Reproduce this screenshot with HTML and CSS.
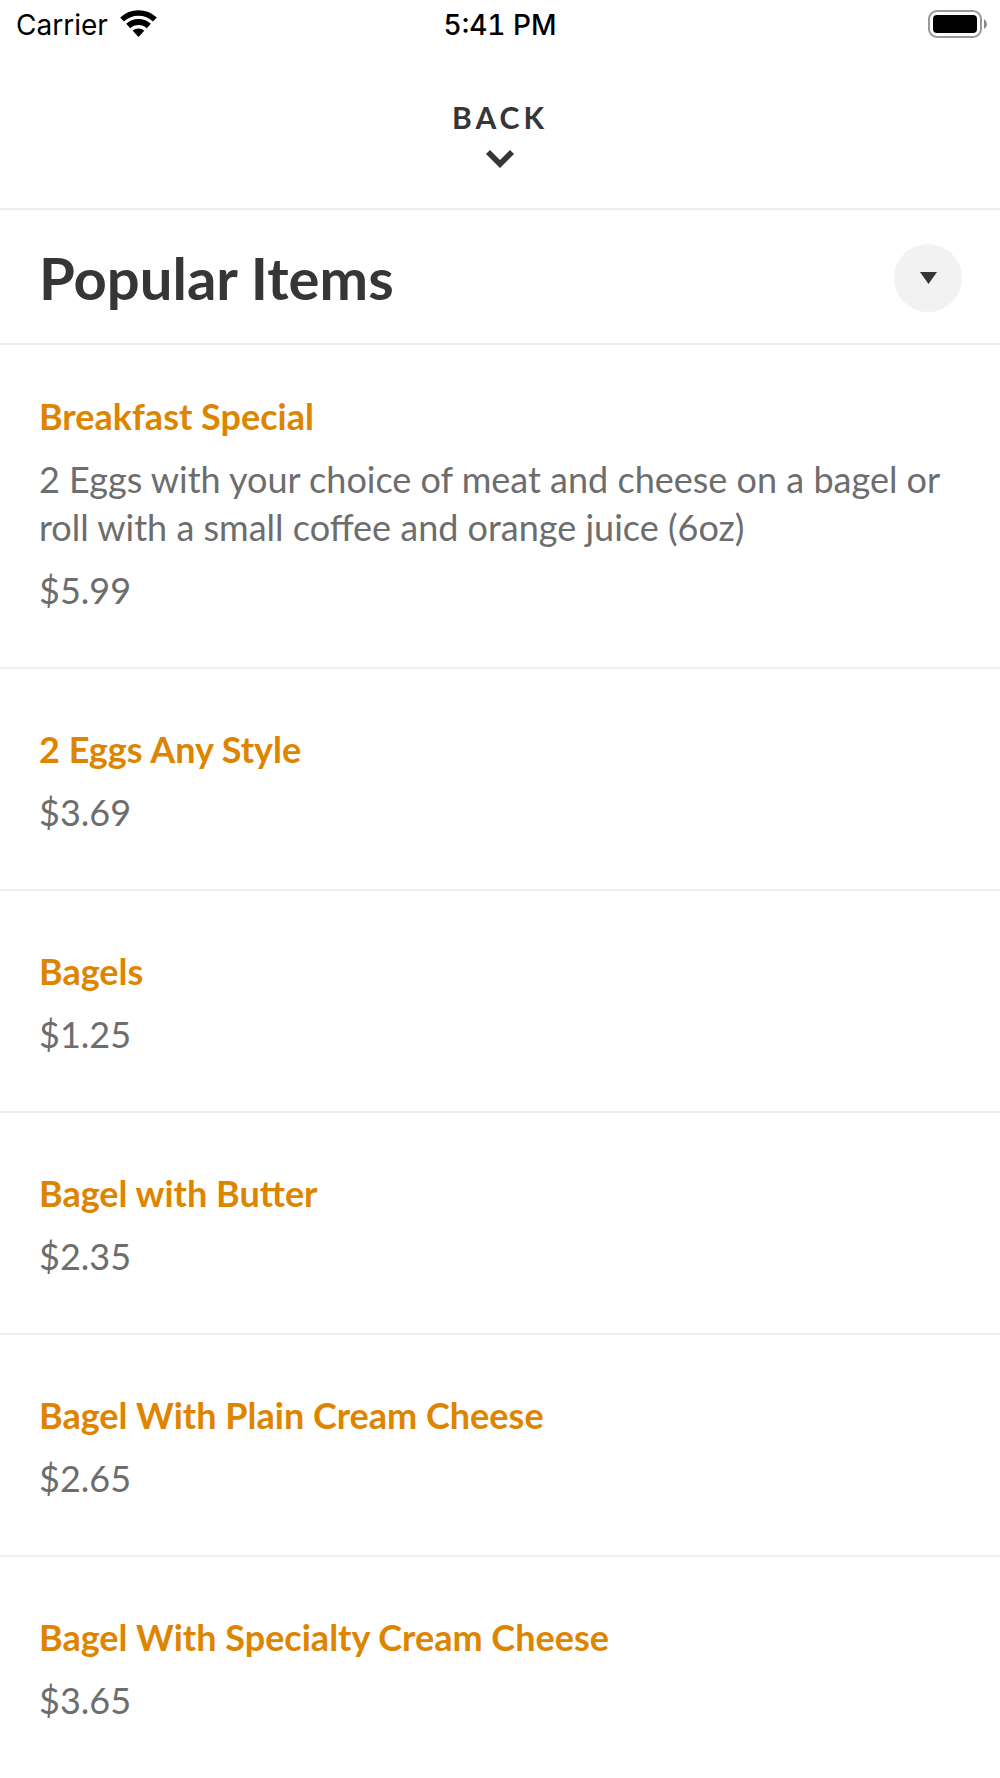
FILE: index.html
```html
<!DOCTYPE html>
<html lang="en">
<head>
    <meta charset="utf-8">
    <meta name="viewport" content="width=device-width, initial-scale=1">
    <title>Popular Items</title>
    <link rel="stylesheet" href="styles.css">
</head>
<body>
    <div class="status-bar">
        <div class="status-left">
            <span>Carrier</span>
            <svg class="wifi" viewBox="0 0 37 30" aria-hidden="true">
                <path d="M2.1 9.5 A24 24 0 0 1 34.9 9.5" fill="none" stroke="#000" stroke-width="5.6"/>
                <path d="M8.2 16 A15 15 0 0 1 28.8 16" fill="none" stroke="#000" stroke-width="6"/>
                <path d="M12.700 20.800 A8.500 8.500 0 0 1 24.300 20.800 L18.500 27 Z"/>
            </svg>
        </div>
        <span class="status-time">5:41 PM</span>
        <svg class="battery" viewBox="0 0 60 30" aria-hidden="true">
            <rect x="1" y="1" width="52" height="26" rx="8" fill="none" stroke="#999" stroke-width="2"/>
            <rect x="5" y="5" width="44" height="18" rx="4"/>
            <path d="M56 9 Q59 11 59 14 Q59 17 56 19 Z" fill="#888"/>
        </svg>
    </div>

    <header class="top">
        <button class="back-button" type="button">
            <span>BACK</span>
            <svg class="chevron" viewBox="0 0 28 18" aria-hidden="true">
                <path d="M0 4 L4 0 L14 10 L24 0 L28 4 L14 18 Z" fill="currentColor"/>
            </svg>
        </button>
    </header>

    <div class="section-header">
        <h1>Popular Items</h1>
        <button class="toggle-button" type="button" aria-label="Choose section">
            <svg class="triangle" viewBox="0 0 18 12" aria-hidden="true">
                <path d="M1 0 H18 L9.500 12 Z" fill="currentColor"/>
            </svg>
        </button>
    </div>

    <ul class="menu">
        <li class="menu-item">
            <h2>Breakfast Special</h2>
            <p class="description">2 Eggs with your choice of meat and cheese on a bagel or roll with a small coffee and orange juice (6oz)</p>
            <p class="price">$5.99</p>
        </li>
        <li class="menu-item">
            <h2>2 Eggs Any Style</h2>
            <p class="price">$3.69</p>
        </li>
        <li class="menu-item">
            <h2>Bagels</h2>
            <p class="price">$1.25</p>
        </li>
        <li class="menu-item">
            <h2>Bagel with Butter</h2>
            <p class="price">$2.35</p>
        </li>
        <li class="menu-item">
            <h2>Bagel With Plain Cream Cheese</h2>
            <p class="price">$2.65</p>
        </li>
        <li class="menu-item">
            <h2>Bagel With Specialty Cream Cheese</h2>
            <p class="price">$3.65</p>
        </li>
    </ul>
</body>
</html>
```
FILE: styles.css
```css
* {
    box-sizing: border-box;
}
body {
    margin: 0;
    background: #fff;
    color: #363636;
    font-family: Lato, sans-serif;
}
h1, h2, p, ul {
    margin: 0;
    padding: 0;
}
button {
    border: none;
    padding: 0;
    color: inherit;
    font: inherit;
    cursor: pointer;
}
.status-bar {
    display: grid;
    grid-template-columns: 1fr auto 1fr;
    align-items: center;
    height: 50px;
    padding: 0 12px;
    color: #000;
    font-family: Inter, sans-serif;
    font-size: 28px;
}
.status-left {
    display: flex;
    align-items: center;
    gap: 12px;
    padding-left: 4px;
}
.wifi {
    width: 37px;
    height: 30px;
}
.status-time {
    font-weight: 500;
    font-variant-numeric: tabular-nums;
}
.battery {
    justify-self: end;
    width: 60px;
    height: 30px;
}
.top {
    display: flex;
    justify-content: center;
    padding: 49px 0 40px;
    border-bottom: 2px solid #eee;
}
.back-button {
    display: flex;
    flex-direction: column;
    align-items: center;
    gap: 15px;
    background: none;
    font-size: 30px;
    font-weight: 700;
    line-height: 36px;
    letter-spacing: 4px;
}
.chevron {
    width: 28px;
    height: 18px;
}
.section-header {
    display: flex;
    justify-content: space-between;
    align-items: center;
    padding: 34px 38px 31px 39px;
    border-bottom: 2px solid #eee;
}
.section-header h1 {
    font-size: 58px;
    font-weight: 700;
    line-height: 68px;
}
.toggle-button {
    display: flex;
    justify-content: center;
    align-items: center;
    width: 68px;
    height: 68px;
    border-radius: 50%;
    background: #f2f2f2;
}
.triangle {
    width: 18px;
    height: 12px;
}
.menu {
    list-style: none;
}
.menu-item {
    padding: 56px 39px 53px;
    border-bottom: 2px solid #eee;
    color: #6d6d6d;
    font-size: 36px;
    line-height: 48px;
}
.menu-item:first-child {
    padding-top: 47px;
}
.menu-item:last-child {
    border-bottom: none;
}
.menu-item h2 {
    color: #de8500;
    font-size: 36px;
    font-weight: 700;
}
.description, .price {
    margin-top: 15px;
}
```
